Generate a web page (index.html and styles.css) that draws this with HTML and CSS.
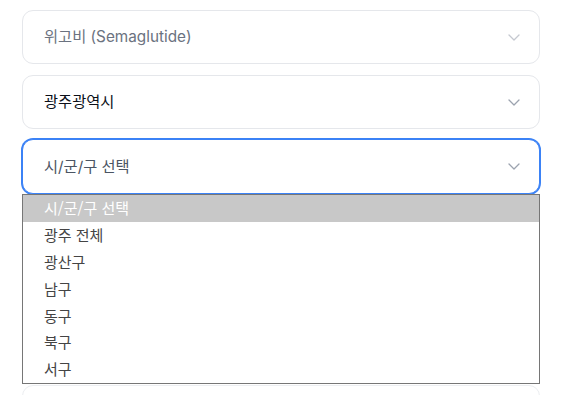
FILE: index.html
```html
<!DOCTYPE html>
<html lang="ko">
<head>
<meta charset="utf-8">
<link rel="stylesheet" href="styles.css">
</head>
<body>
<div class="form">
  <div class="select is-disabled">
    <span class="select-value">위고비 (Semaglutide)</span>
    <svg class="chevron" viewBox="0 0 12 7" width="12" height="7"><path d="M1 1l5 5 5-5" fill="none" stroke="currentColor" stroke-width="1.3" stroke-linecap="round" stroke-linejoin="round"/></svg>
  </div>
  <div class="select is-filled">
    <span class="select-value">광주광역시</span>
    <svg class="chevron" viewBox="0 0 12 7" width="12" height="7"><path d="M1 1l5 5 5-5" fill="none" stroke="currentColor" stroke-width="1.3" stroke-linecap="round" stroke-linejoin="round"/></svg>
  </div>
  <div class="field-open">
    <div class="select is-focused">
      <span class="select-value">시/군/구 선택</span>
      <svg class="chevron" viewBox="0 0 12 7" width="12" height="7"><path d="M1 1l5 5 5-5" fill="none" stroke="currentColor" stroke-width="1.3" stroke-linecap="round" stroke-linejoin="round"/></svg>
    </div>
    <ul class="options">
      <li class="option is-active">시/군/구 선택</li>
      <li class="option">광주 전체</li>
      <li class="option">광산구</li>
      <li class="option">남구</li>
      <li class="option">동구</li>
      <li class="option">북구</li>
      <li class="option">서구</li>
    </ul>
  </div>
  <div class="select next"></div>
</div>
</body>
</html>
```
FILE: styles.css
```css
* { box-sizing: border-box; }
html, body { margin: 0; height: 100%; overflow: hidden; background: #fff; }
body {
  font-family: Inter, "Noto Sans CJK KR", sans-serif;
  padding: 10px 32px 0 22px;
}
.form { display: flex; flex-direction: column; }
.select {
  height: 54px;
  border: 1px solid #e5e7eb;
  border-radius: 11px;
  background: #fff;
  display: flex;
  align-items: center;
  justify-content: space-between;
  padding: 0 19px 0 21px;
  font-size: 15.3px;
  margin-bottom: 11px;
}
.select-value { line-height: 20px; }
.chevron { color: #9ca3af; display: block; }
.is-disabled .select-value { color: #6b7280; }
.is-disabled .chevron { color: #c5c8d0; }
.is-filled .select-value { color: #0b0f19; font-weight: 400; }
.field-open { display: flex; flex-direction: column; margin-bottom: 1px; }
.field-open .select { margin-bottom: 0; }
.is-focused {
  border-color: #3b82f6;
  box-shadow: 0 0 0 1px #3b82f6;
  height: 55px;
  margin-top: -1px;
}
.is-focused .select-value { color: #4b5563; }
.options {
  list-style: none;
  margin: 0;
  padding: 0;
  border: 1px solid #767676;
  background: #fff;
  font-family: "Noto Sans CJK KR", sans-serif;
  font-size: 15px;
  color: #444;
}
.option {
  height: 26.9px;
  line-height: 26.9px;
  padding-left: 21px;
}
.option.is-active { background: #c8c8c8; color: #fff; }
.next { border-color: #eceef1; height: 60px; }
```
